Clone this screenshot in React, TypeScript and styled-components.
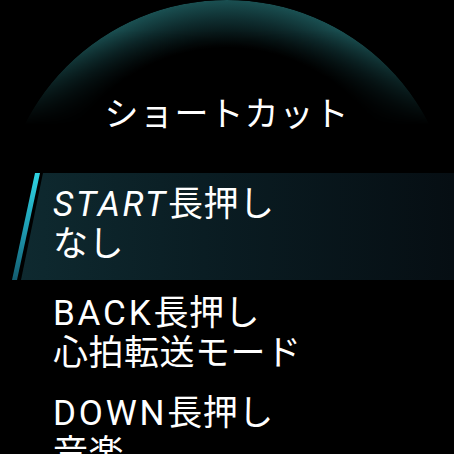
import React from "react";
import styled, { createGlobalStyle } from "styled-components";

const Global = createGlobalStyle`
  html, body { margin: 0; padding: 0; background: #000; }
  body { font-family: Roboto, "Noto Sans CJK JP", sans-serif; color: #fff; }
`;

const Screen = styled.div`
  position: relative;
  width: 454px;
  height: 454px;
  overflow: hidden;
  background: #000;
`;

const Glow = styled.div`
  position: absolute;
  left: 0;
  top: 0;
  width: 454px;
  height: 454px;
  border-radius: 50%;
  background: radial-gradient(
    circle closest-side at 50% 50%,
    rgba(0, 0, 0, 0) 79%,
    rgba(20, 62, 65, 0.7) 91%,
    rgb(26, 80, 82) 100%
  );
  -webkit-mask-image: linear-gradient(to bottom, #000 0px, #000 30px, rgba(0,0,0,0.45) 80px, transparent 125px);
  mask-image: linear-gradient(to bottom, #000 0px, #000 30px, rgba(0,0,0,0.45) 80px, transparent 125px);
  pointer-events: none;
`;

const Content = styled.div`
  position: relative;
  display: flex;
  flex-direction: column;
`;

const Header = styled.div`
  height: 173px;
  box-sizing: border-box;
  padding-top: 92px;
  display: flex;
  justify-content: center;
  align-items: flex-start;
`;

const Title = styled.h1`
  margin: 0;
  font-family: "Noto Sans CJK JP", sans-serif;
  font-weight: 400;
  font-size: 34px;
  line-height: 40px;
  letter-spacing: 1px;
  color: #fff;
`;

const List = styled.div`
  display: flex;
  flex-direction: column;
`;

const Item = styled.div<{ $selected?: boolean }>`
  position: relative;
  padding: ${(p) => (p.$selected ? "12px 0 15px 53px" : "14px 0 6px 53px")};
  font-size: 35px;
  line-height: 40px;
  letter-spacing: 0.5px;
  color: #fff;
  ${(p) =>
    p.$selected &&
    `
    &::before {
      content: "";
      position: absolute;
      inset: 0;
      background: linear-gradient(90deg, #0f2b31 0%, #0a1d23 45%, #060e13 100%);
      clip-path: polygon(43px 0, 100% 0, 100% 100%, 21px 100%);
    }
    &::after {
      content: "";
      position: absolute;
      inset: 0;
      background: linear-gradient(180deg, #2fd3e2 0%, #1f9fb5 50%, #135c70 100%);
      clip-path: polygon(35px 0, 40px 0, 17px 100%, 12px 100%);
    }
  `}
`;

const Line = styled.div`
  position: relative;
  z-index: 1;
  white-space: nowrap;
`;

const Key = styled.span<{ $italic?: boolean }>`
  font-style: ${(p) => (p.$italic ? "italic" : "normal")};
  letter-spacing: 2.8px;
`;

const items = [
  { key: "START", value: "なし" },
  { key: "BACK", value: "心拍転送モード" },
  { key: "DOWN", value: "音楽" },
];

export default function App() {
  return (
    <Screen>
      <Global />
      <Glow />
      <Content>
        <Header>
          <Title>ショートカット</Title>
        </Header>
        <List>
          {items.map((it, i) => (
            <Item key={it.key} $selected={i === 0}>
              <Line>
                <Key $italic={i === 0}>{it.key}</Key>長押し
              </Line>
              <Line>{it.value}</Line>
            </Item>
          ))}
        </List>
      </Content>
    </Screen>
  );
}
